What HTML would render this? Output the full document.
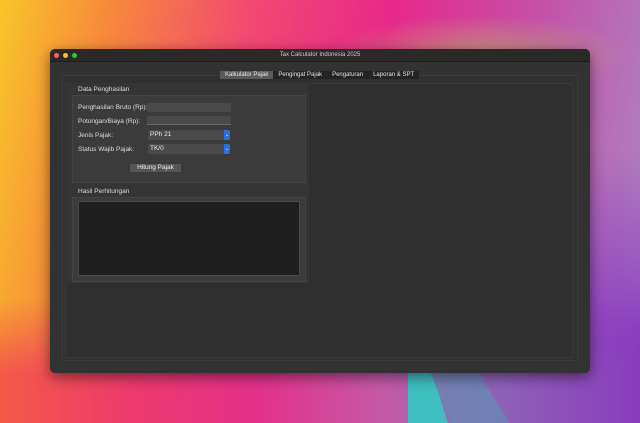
<!DOCTYPE html>
<html><head><meta charset="utf-8"><style>
*{margin:0;padding:0;box-sizing:border-box}
body{width:640px;height:423px;overflow:hidden;position:relative;font-family:"Liberation Sans",sans-serif;font-size:6.5px;color:#ddd;
background:linear-gradient(100deg,#f9c52a 0%,#f78b3a 15%,#f24a70 35%,#e8288a 55%,#c64fa6 75%,#a98bc6 100%);}
.bg2{position:absolute;left:0;top:0;width:640px;height:423px;
background:radial-gradient(ellipse 150px 40px at 480px 55px,rgba(190,170,110,.7),rgba(0,0,0,0));}
.bot{position:absolute;left:0;top:300px;width:640px;height:123px;background:linear-gradient(90deg,#f35a48 0%,#ee3a6c 20%,#e4308a 40%,#c45aa6 60%,#8f66b8 75%,#8a3cbc 100%);
-webkit-mask-image:linear-gradient(180deg,rgba(0,0,0,0),#000 60%);}
.right{position:absolute;left:560px;top:150px;width:80px;height:273px;background:linear-gradient(180deg,rgba(170,130,200,0),#8d3ec0 70%)}
.teal{position:absolute;left:408px;top:372px;width:40px;height:51px;background:#3fbfbf;clip-path:polygon(0 0,60% 0,100% 100%,0 100%)}
.teal2{position:absolute;left:430px;top:372px;width:80px;height:51px;background:rgba(100,140,180,.7);clip-path:polygon(0 0,60% 0,100% 100%,25% 100%)}
.win{position:absolute;left:50px;top:49px;width:540px;height:324px;background:#323232;border-radius:5px;box-shadow:0 4px 14px rgba(0,0,0,.5);overflow:hidden}
.title{height:13px;background:#2b2828;border-bottom:1px solid #1c1c1c;text-align:center;font-size:6px;line-height:13px;color:#cfcfcf}
.dot{position:absolute;top:4px;width:5px;height:5px;border-radius:50%}
.abs{position:absolute}
.tabpane{left:12px;top:26px;width:516px;height:286px;border:1px solid #3c3c3c;background:#303030}
.inner{left:15px;top:34px;width:508px;height:275px;background:#2f2f2f;border:1px solid #3a3a3a}
.tabs{left:170px;top:22px;height:8px;display:flex;background:#232323;font-size:6px;line-height:8px}
.tabs div{padding:0 5px;color:#e6e6e6}
.tabs .a{background:#5a5a5a}
.lp{left:17px;top:34px;width:242px;height:200px;background:#353535}
.g{background:#3b3b3b;border:1px solid #444}
.inp{background:#494949;height:9px;width:84px}
.cb{background:#4a4a4a;height:10px;width:82px;border-radius:2px;color:#eee;padding-left:2px;line-height:10px}
.arr{position:absolute;right:0;top:0;width:6px;height:10px;background:#2a6fe0;border-radius:0 2px 2px 0;color:#fff;font-size:5px;text-align:center;line-height:10px}
.btn{left:80px;top:115px;width:51px;height:8px;background:#555;text-align:center;line-height:8px;color:#eee}
</style></head><body>
<div class="bg2"></div><div class="right"></div><div class="bot"></div><div class="teal"></div><div class="teal2"></div>
<div class="win">
<div class="title">Tax Calculator Indonesia 2025</div>
<div class="dot" style="left:4px;background:#fe5f57"></div>
<div class="dot" style="left:13px;background:#febc2e"></div>
<div class="dot" style="left:22px;background:#28c840"></div>
<div class="abs tabpane"></div>
<div class="abs inner"></div>
<div class="abs tabs"><div class="a">Kalkulator Pajak</div><div>Pengingat Pajak</div><div>Pengaturan</div><div>Laporan &amp; SPT</div></div>
<div class="abs lp"></div>
<div class="abs" style="left:28px;top:37px">Data Penghasilan</div>
<div class="abs g" style="left:22px;top:46px;width:234px;height:88px"></div>
<div class="abs" style="left:28px;top:55px">Penghasilan Bruto (Rp):</div>
<div class="abs inp" style="left:97px;top:54px"></div>
<div class="abs" style="left:28px;top:69px">Potongan/Biaya (Rp):</div>
<div class="abs inp" style="left:97px;top:67px;border-bottom:1px solid #666"></div>
<div class="abs" style="left:28px;top:83px">Jenis Pajak:</div>
<div class="abs cb" style="left:98px;top:81px">PPh 21<div class="arr">⌄</div></div>
<div class="abs" style="left:28px;top:97px">Status Wajib Pajak:</div>
<div class="abs cb" style="left:98px;top:95px">TK/0<div class="arr">⌄</div></div>
<div class="abs btn">Hitung Pajak</div>
<div class="abs" style="left:28px;top:139px">Hasil Perhitungan</div>
<div class="abs g" style="left:22px;top:148px;width:234px;height:85px"></div>
<div class="abs" style="left:28px;top:152px;width:222px;height:75px;background:#1f1f1f;border:1px solid #4a4a4a"></div>
</div>
</body></html>
